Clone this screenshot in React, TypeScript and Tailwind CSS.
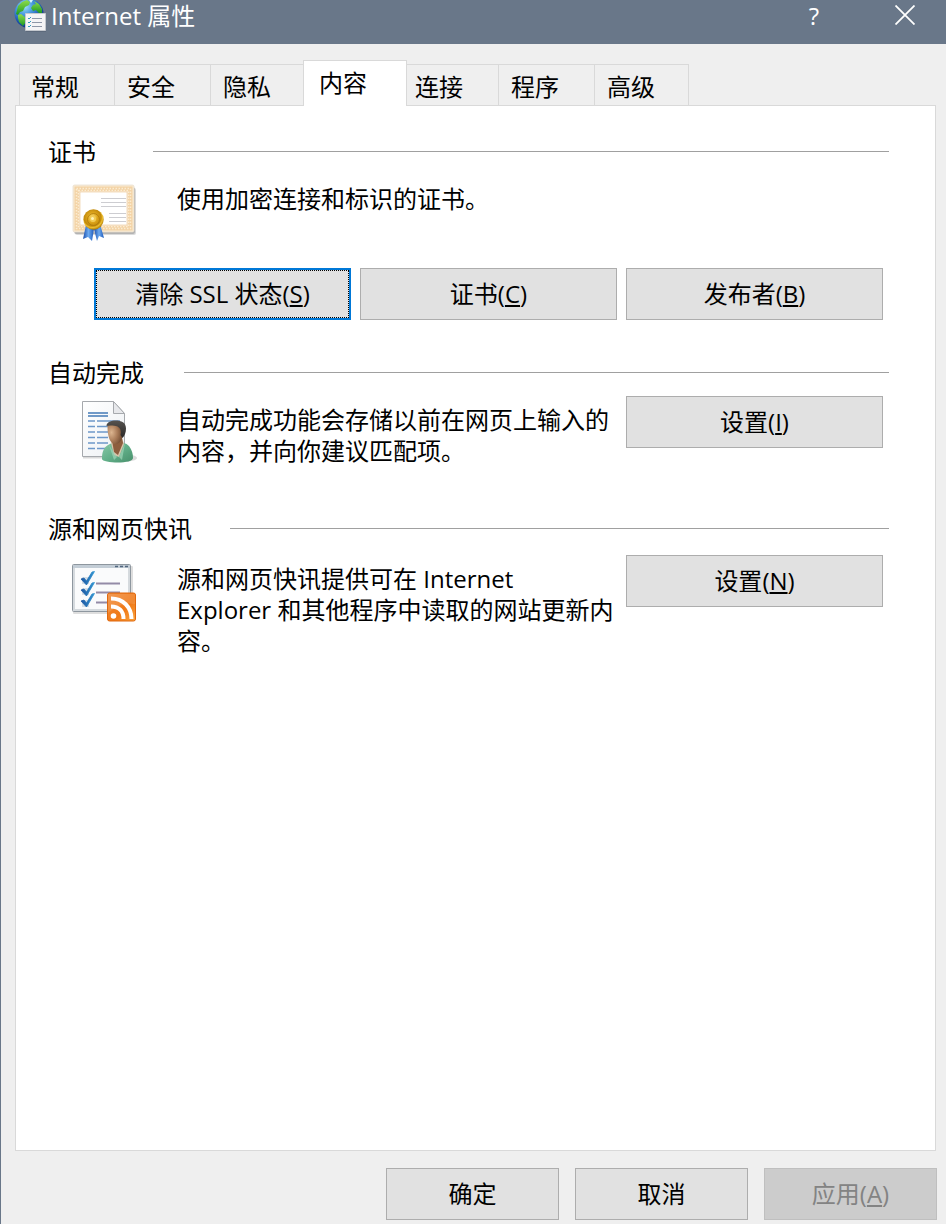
import type { ReactNode } from 'react';

const tabs = ['常规', '安全', '隐私', '内容', '连接', '程序', '高级'];

function GlobeIcon() {
  return (
    <svg width="32" height="32" viewBox="0 0 32 32" aria-hidden="true" className="shrink-0">
      <defs>
        <radialGradient id="ocean" cx="0.35" cy="0.25" r="0.8">
          <stop offset="0" stopColor="#a5e4fa" />
          <stop offset="0.35" stopColor="#4a9ae0" />
          <stop offset="0.75" stopColor="#174ba8" />
          <stop offset="1" stopColor="#0b2a78" />
        </radialGradient>
        <linearGradient id="land" x1="0" y1="0" x2="0" y2="1">
          <stop offset="0" stopColor="#8fdc4c" />
          <stop offset="1" stopColor="#1d9a22" />
        </linearGradient>
      </defs>
      <circle cx="15" cy="13.500" r="14.500" fill="url(#ocean)" />
      <path d="M4 6 8 2l5-2 3 2-1 3-4 2-2 4-3 1-2 3-2-1z" fill="url(#land)" />
      <path d="M4 15l3-1 5 4 0 4-3 4-4-4-1-4z" fill="url(#land)" />
      <path d="M20 1l5 3 3 5 0 4-3 0-3-3-3 1-2-3 2-3 3-1z" fill="url(#land)" />
      <path d="M17 3l2-3h-4z" fill="#d5f5fb" />
      <path d="M12 15h20v17H12z" fill="#4f5c6e" opacity="0.5" />
      <path d="M11.500 13.500h20v17h-20z" fill="#f4f4f6" stroke="#c4c8ce" />
      <path d="M18 18.500h10M18 22.500h10M18 26.500h10" stroke="#8e97a8" />
      <path d="M14 18l1 1 2-2M14 22l1 1 2-2M14 26l1 1 2-2" stroke="#2f9ac0" fill="none" />
    </svg>
  );
}

function CertificateIcon() {
  return (
    <svg width="68" height="64" viewBox="0 0 68 64" aria-hidden="true">
      <defs>
        <radialGradient id="seal" cx="0.45" cy="0.4" r="0.6">
          <stop offset="0" stopColor="#ffe680" />
          <stop offset="0.4" stopColor="#dda51b" />
          <stop offset="0.7" stopColor="#c18a0c" />
          <stop offset="0.82" stopColor="#edbd2e" />
          <stop offset="1" stopColor="#ad7a08" />
        </radialGradient>
        <linearGradient id="ribbon" x1="0" x2="1">
          <stop offset="0" stopColor="#1b4fae" />
          <stop offset="0.5" stopColor="#6caaf0" />
          <stop offset="1" stopColor="#1d59bc" />
        </linearGradient>
      </defs>
      <rect x="3" y="5" width="61" height="47" rx="2" fill="#000" opacity="0.14" />
      <rect x="2" y="4" width="61" height="47" rx="2" fill="#000" opacity="0.18" />
      <rect x="1" y="2" width="61" height="47" rx="1.500" fill="#f9ead3" stroke="#e6dccb" strokeWidth="0.700" />
      <rect x="5" y="6" width="53" height="39" fill="#fff" stroke="#f3d3a6" strokeWidth="5" />
      <rect x="4.500" y="5.500" width="54" height="40" fill="none" stroke="#fcecd0" strokeWidth="1.500" strokeDasharray="1.500 1.500" />
      <rect x="6.500" y="7.500" width="50" height="36" fill="none" stroke="#fcecd0" strokeWidth="1.500" strokeDasharray="1.500 1.500" />
      <rect x="8" y="9" width="47" height="33" fill="none" stroke="#ecc593" strokeWidth="0.600" />
      <path d="M29 15.500h25M29 19.500h25M29 23.500h25M37 30.500h17M37 34.500h17M37 38.500h17" stroke="#cdcdd1" strokeWidth="1.200" />
      <path d="M14 42l-3 14 5-2 4 4 2-12z" fill="url(#ribbon)" />
      <path d="M22 46l3 12 2-5 5 2-4-14z" fill="url(#ribbon)" />
      <circle cx="21.500" cy="36.500" r="10.200" fill="url(#seal)" />
      <circle cx="21.500" cy="36.500" r="6" fill="none" stroke="#a97306" opacity="0.7" />
      <circle cx="21" cy="36" r="3" fill="#f1cb55" />
      <circle cx="20.500" cy="35.500" r="1.500" fill="#fff4b9" />
    </svg>
  );
}

function ProfileIcon() {
  return (
    <svg width="68" height="64" viewBox="0 0 68 64" aria-hidden="true">
      <defs>
        <linearGradient id="paper" x1="0" y1="0" x2="1" y2="1">
          <stop offset="0" stopColor="#fff" />
          <stop offset="1" stopColor="#edf0f3" />
        </linearGradient>
        <radialGradient id="face" cx="0.25" cy="0.5" r="0.8">
          <stop offset="0" stopColor="#dcb590" />
          <stop offset="0.45" stopColor="#ab7d5a" />
          <stop offset="1" stopColor="#5f3b23" />
        </radialGradient>
        <linearGradient id="shirt" x1="0" y1="0" x2="1" y2="1">
          <stop offset="0" stopColor="#8ac9a8" />
          <stop offset="0.5" stopColor="#63b08a" />
          <stop offset="1" stopColor="#478f6b" />
        </linearGradient>
        <linearGradient id="hair" x1="0" y1="0" x2="0" y2="1">
          <stop offset="0" stopColor="#55524f" />
          <stop offset="1" stopColor="#2a2827" />
        </linearGradient>
      </defs>
      <ellipse cx="50" cy="58" rx="15" ry="4" fill="#000" opacity="0.14" />
      <path d="M11 2.500h30l12 13v43H11z" fill="#000" opacity="0.15" />
      <path d="M10.500 1.500h31l11 12v43h-42z" fill="url(#paper)" stroke="#a6a9ad" />
      <path d="M41.500 1.500v12h11z" fill="#e7e8eb" stroke="#a6a9ad" />
      <path d="M16 13h20M16 16h20" stroke="#4379b7" strokeWidth="1.600" />
      <path d="M16 21h7M25 21h23M16 26.500h7M25 26.500h12M16 32h7M25 32h11M16 37.500h7M25 37.500h11M16 43h7M25 43h11M16 48.500h7M25 48.500h8" stroke="#6d98c9" strokeWidth="1.600" />
      <path d="M30 59c0-6 1-11 6-14 3-2 7-3 10-3 4 0 8 1 11 4 3 4 4 8 4 12 0 3-7 4.500-15 4.500S30 61 30 59z" fill="url(#shirt)" />
      <path d="M39 43l3 12 5 2 5-13-2-6H40z" fill="#d8c3aa" />
      <path d="M40 40l2 12 4 3 5-12-1-5z" fill="#8d5e3e" />
      <path d="M35.500 27c0-4 5-6 9-6s7 3 7 7c0 8-2 16-8.500 16-5 0-7.500-8-7.500-17z" fill="url(#face)" />
      <path d="M34.500 26c0-4 5-5.500 9-5.500 6 0 10.500 2 10.500 8 0 4-1.500 7.500-3.500 9.500l-2-3c1-4 0-7-3-8.500-3-1-8-1.500-11-.5z" fill="url(#hair)" />
      <path d="M37 45l5 15 3-3zM53 43l-6 14 3 3z" fill="#a0d6b8" opacity="0.7" />
    </svg>
  );
}

function FeedIcon() {
  return (
    <svg width="68" height="64" viewBox="0 0 68 64" aria-hidden="true">
      <defs>
        <linearGradient id="feed" x1="0" y1="0" x2="1" y2="1">
          <stop offset="0" stopColor="#f08a3a" />
          <stop offset="0.6" stopColor="#f07a18" />
          <stop offset="1" stopColor="#fba63e" />
        </linearGradient>
        <linearGradient id="check" x1="0" y1="0" x2="1" y2="0">
          <stop offset="0" stopColor="#1d57a3" />
          <stop offset="1" stopColor="#3196d2" />
        </linearGradient>
      </defs>
      <rect x="1" y="3" width="60" height="48" rx="1" fill="#000" opacity="0.13" />
      <rect x="0.500" y="1.500" width="58" height="47" rx="1" fill="#fff" stroke="#8e979f" />
      <rect x="2" y="3" width="55" height="44" fill="#fafbfc" stroke="#d5dade" strokeWidth="2" />
      <path d="M1 2h57v3H1z" fill="#c3cdd6" />
      <path d="M43 3.500h3M48 3.500h3M53 3.500h3" stroke="#52677f" strokeWidth="1.500" />
      <path d="M24 20.500h24M24 29.500h24M24 39.500h12" stroke="#938ba7" strokeWidth="2" />
      <path d="M10 14h7v7h-7zM10 25h7v7h-7zM10 37h7v7h-7z" fill="#d5dfe7" />
      <path d="M9 16l3-1 2.500 3 5.500-9 2.500-.5-8 13.500zM9 27l3-1 2.500 3 5.500-9 2.500-.5-8 13.500zM9 38l3-1 2.500 3 5.500-9 2.500-.5-8 13.500z" fill="url(#check)" stroke="url(#check)" strokeWidth="0.800" />
      <rect x="35.500" y="30" width="28" height="28" rx="2" fill="url(#feed)" stroke="#e0690f" />
      <path d="M36 31h27v10c-10-2-17 1-27 9z" fill="#fff" opacity="0.12" />
      <circle cx="41.500" cy="53" r="2.800" fill="#fff" />
      <path d="M39 43.500c8 0 12.500 4.500 12.500 12.500M39 35.500c12 0 20.500 8.500 20.500 20.500" stroke="#fff" strokeWidth="4" fill="none" />
    </svg>
  );
}

function Key({ children }: { children: string }) {
  return <>(<span className="underline decoration-2 underline-offset-2">{children}</span>)</>;
}

function PushButton({ children, focused = false }: { children: ReactNode; focused?: boolean }) {
  return (
    <button
      type="button"
      className={
        focused
          ? 'h-13 w-[257px] border-2 border-[#0078d7] bg-[#e1e1e1] pb-0.5 outline-1 -outline-offset-3 outline-dotted outline-black'
          : 'h-13 w-[257px] border border-[#adadad] bg-[#e1e1e1] pb-0.5'
      }
    >
      {children}
    </button>
  );
}

function Heading({ children, width }: { children: string; width: string }) {
  return (
    <div className="flex h-8 items-center">
      <h2 className={`${width} shrink-0`}>{children}</h2>
      <div className="h-px flex-1 bg-[#a0a0a0]" />
    </div>
  );
}

export default function App() {
  return (
    <div
      lang="zh-CN"
      className="flex min-h-screen flex-col border-l border-[#697789] bg-[#efefef] font-['Open_Sans','Noto_Sans_CJK_SC',sans-serif] text-2xl leading-[31px] text-black"
    >
      <header className="flex h-11 items-start bg-[#697789] pl-[13px] text-white">
        <GlobeIcon />
        <h1 className="flex-1 pl-[5px]">Internet 属性</h1>
        <button type="button" aria-label="帮助" className="h-8 w-[100px] pb-1">?</button>
        <button type="button" aria-label="关闭" className="flex h-8 w-[82px] items-center justify-center pb-0.5">
          <svg width="20" height="20" viewBox="0 0 20 20" aria-hidden="true">
            <path d="M0.500 0.500l19 19M19.500 0.500l-19 19" stroke="currentColor" strokeWidth="1.800" />
          </svg>
        </button>
      </header>

      <div className="flex flex-1 flex-col pr-[10px] pl-[14px] pt-4">
        <div role="tablist" className="flex items-end pl-1">
          {tabs.map((tab, i) => (
            <button
              key={tab}
              type="button"
              role="tab"
              aria-selected={i === 3}
              className={
                i === 3
                  ? 'z-10 -mx-1 -mb-px h-[46px] w-[104px] border border-b-0 border-[#d9d9d9] bg-white pb-0.5 pl-[15px] text-left'
                  : 'h-[41px] w-24 border-t border-r border-[#d9d9d9] pt-0.5 pl-3 text-left first:border-l first:pl-[11px] last:w-[94px]'
              }
            >
              {tab}
            </button>
          ))}
        </div>

        <main className="flex-1 border border-[#d9d9d9] bg-white pt-[29px] pr-[46px] pl-8">
          <section>
            <Heading width="w-[105px]">证书</Heading>
            <div className="mt-4 flex pl-6">
              <div className="w-[105px]"><CertificateIcon /></div>
              <p className="flex-1">使用加密连接和标识的证书。</p>
            </div>
            <div className="mt-[21px] flex justify-end gap-[9px] pr-[6px]">
              <PushButton focused>清除 SSL 状态<Key>S</Key></PushButton>
              <PushButton>证书<Key>C</Key></PushButton>
              <PushButton>发布者<Key>B</Key></PushButton>
            </div>
          </section>

          <section className="mt-9">
            <Heading width="w-[136px]">自动完成</Heading>
            <div className="mt-2 flex pr-[6px] pl-6">
              <div className="w-[105px] pt-1"><ProfileIcon /></div>
              <p className="flex-1 pt-2">自动完成功能会存储以前在网页上输入的内容，并向你建议匹配项。</p>
              <PushButton>设置<Key>I</Key></PushButton>
            </div>
          </section>

          <section className="mt-[46px]">
            <Heading width="w-[182px]">源和网页快讯</Heading>
            <div className="mt-[11px] flex pr-[6px] pl-6">
              <div className="w-[105px] pt-2"><FeedIcon /></div>
              <p className="flex-1 pt-2">源和网页快讯提供可在 Internet<br />Explorer 和其他程序中读取的网站更新内容。</p>
              <PushButton>设置<Key>N</Key></PushButton>
            </div>
          </section>
        </main>
      </div>

      <footer className="flex justify-end gap-4 pt-[17px] pr-[9px] pb-1">
        <button type="button" className="h-13 w-[173px] border border-[#adadad] bg-[#e1e1e1] pb-0.5">确定</button>
        <button type="button" className="h-13 w-[173px] border border-[#adadad] bg-[#e1e1e1] pb-0.5">取消</button>
        <button type="button" disabled className="h-13 w-[173px] border border-[#bfbfbf] bg-[#cccccc] pb-0.5 text-[#838383]">应用<Key>A</Key></button>
      </footer>
    </div>
  );
}
